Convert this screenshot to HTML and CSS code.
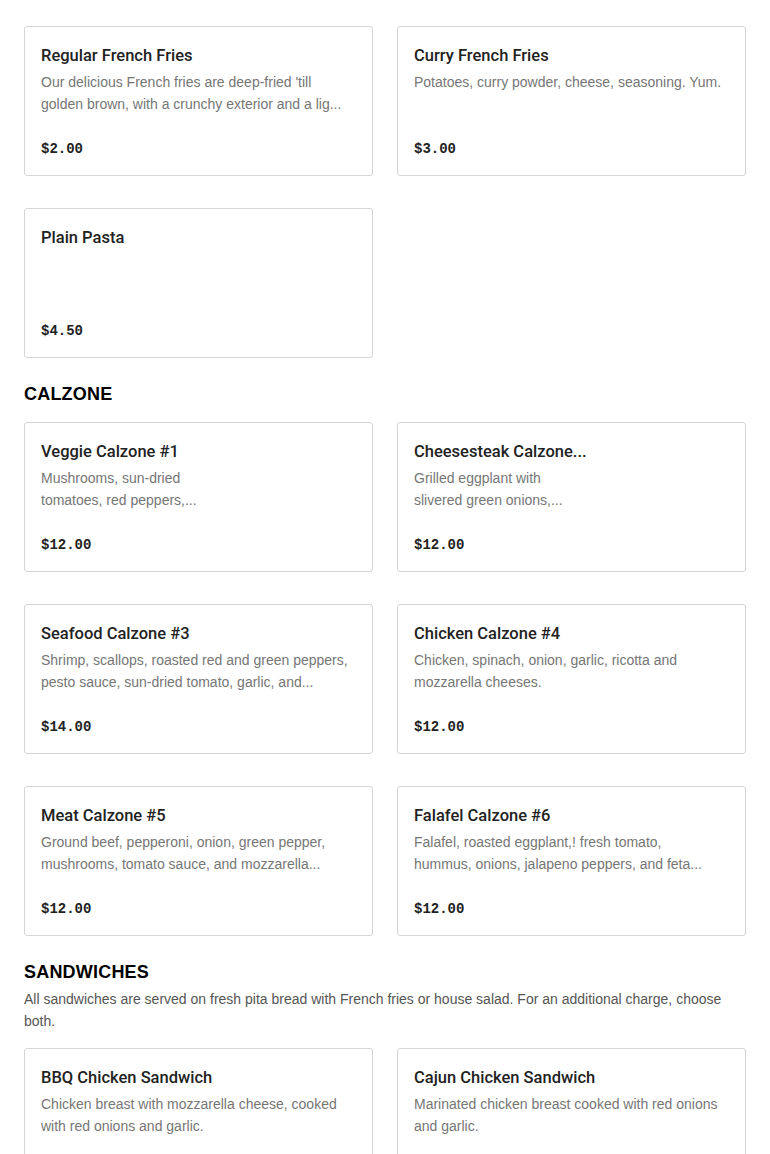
FILE: index.html
```html
<!DOCTYPE html>
<html>
<head>
<meta charset="utf-8">
<link rel="stylesheet" href="styles.css">
</head>
<body>
<main class="menu">
  <section class="section">
    <div class="grid">
      <article class="card">
        <h3 class="card-title">Regular French Fries</h3>
        <p class="card-desc">Our delicious French fries are deep-fried 'till golden brown, with a crunchy exterior and a lig...</p>
        <div class="card-price">$2.00</div>
      </article>
      <article class="card">
        <h3 class="card-title">Curry French Fries</h3>
        <p class="card-desc">Potatoes, curry powder, cheese, seasoning. Yum.</p>
        <div class="card-price">$3.00</div>
      </article>
      <article class="card">
        <h3 class="card-title">Plain Pasta</h3>
        <p class="card-desc"></p>
        <div class="card-price">$4.50</div>
      </article>
    </div>
  </section>

  <section class="section">
    <h2 class="section-title">CALZONE</h2>
    <div class="grid">
      <article class="card narrow">
        <h3 class="card-title">Veggie Calzone #1</h3>
        <p class="card-desc">Mushrooms, sun-dried tomatoes, red peppers,...</p>
        <div class="card-price">$12.00</div>
      </article>
      <article class="card narrow">
        <h3 class="card-title">Cheesesteak Calzone...</h3>
        <p class="card-desc">Grilled eggplant with slivered green onions,...</p>
        <div class="card-price">$12.00</div>
      </article>
      <article class="card">
        <h3 class="card-title">Seafood Calzone #3</h3>
        <p class="card-desc">Shrimp, scallops, roasted red and green peppers, pesto sauce, sun-dried tomato, garlic, and...</p>
        <div class="card-price">$14.00</div>
      </article>
      <article class="card">
        <h3 class="card-title">Chicken Calzone #4</h3>
        <p class="card-desc">Chicken, spinach, onion, garlic, ricotta and mozzarella cheeses.</p>
        <div class="card-price">$12.00</div>
      </article>
      <article class="card">
        <h3 class="card-title">Meat Calzone #5</h3>
        <p class="card-desc">Ground beef, pepperoni, onion, green pepper, mushrooms, tomato sauce, and mozzarella...</p>
        <div class="card-price">$12.00</div>
      </article>
      <article class="card">
        <h3 class="card-title">Falafel Calzone #6</h3>
        <p class="card-desc">Falafel, roasted eggplant,! fresh tomato,<br>hummus, onions, jalapeno peppers, and feta...</p>
        <div class="card-price">$12.00</div>
      </article>
    </div>
  </section>

  <section class="section">
    <h2 class="section-title">SANDWICHES</h2>
    <p class="section-desc">All sandwiches are served on fresh pita bread with French fries or house salad. For an additional charge, choose both.</p>
    <div class="grid">
      <article class="card">
        <h3 class="card-title">BBQ Chicken Sandwich</h3>
        <p class="card-desc">Chicken breast with mozzarella cheese, cooked with red onions and garlic.</p>
        <div class="card-price">$12.00</div>
      </article>
      <article class="card">
        <h3 class="card-title">Cajun Chicken Sandwich</h3>
        <p class="card-desc">Marinated chicken breast cooked with red onions and garlic.</p>
        <div class="card-price">$12.00</div>
      </article>
    </div>
  </section>
</main>
</body>
</html>
```

FILE: styles.css
```css
* { box-sizing: border-box; }
html, body { margin: 0; padding: 0; background: #fff; }
body {
  font-family: "Liberation Sans", Arial, sans-serif;
  color: #222;
}
.menu {
  padding: 26px 24px 0 24px;
}
.section + .section { margin-top: 24px; }
.section-title {
  margin: 0 0 16px 0;
  font-size: 18px;
  line-height: 24px;
  font-weight: 900;
  color: #000;
  letter-spacing: 0.2px;
}
.section-desc {
  margin: -12px 0 16px 0;
  font-size: 14px;
  line-height: 22px;
  color: #555;
}
.grid {
  display: grid;
  grid-template-columns: 1fr 1fr;
  column-gap: 24px;
  row-gap: 32px;
}
.card {
  border: 1px solid #d4d4d4;
  border-radius: 3px;
  padding: 16px;
  background: #fff;
}
.card-title {
  margin: 0;
  padding-top: 1px;
  font-family: Roboto, "Liberation Sans", sans-serif;
  font-size: 16.5px;
  line-height: 24px;
  font-weight: 500;
  color: #222;
  white-space: nowrap;
  overflow: hidden;
  text-overflow: ellipsis;
}
.card-desc {
  margin: 3px 0 0 0;
  height: 44px;
  font-size: 14px;
  line-height: 22px;
  color: #767676;
  overflow: hidden;
}
.narrow .card-title { max-width: 180px; }
.narrow .card-desc { max-width: 160px; }
.card-price {
  margin-top: 24px;
  font-family: "Liberation Mono", "DejaVu Sans Mono", monospace;
  font-weight: 700;
  font-size: 14px;
  line-height: 20px;
  color: #222;
}
```
